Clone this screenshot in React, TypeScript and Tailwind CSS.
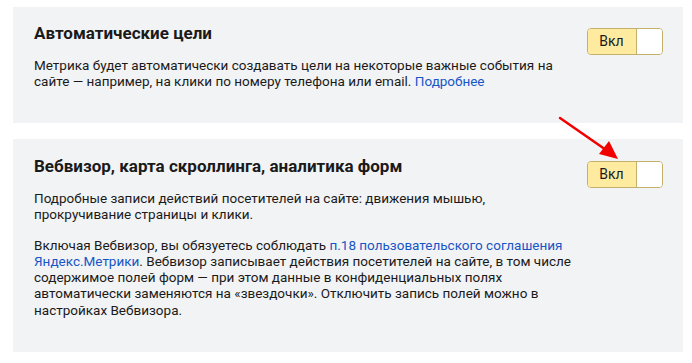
import React from "react";

function Toggle() {
  return (
    <div className="mt-[7px] flex h-[27px] w-[76px] shrink-0 overflow-hidden rounded-[4px] border border-[#c4b06a] text-[14px] text-[#1a1a1a]">
      <div className="flex flex-1 items-center justify-center bg-[#ffeba0] pr-[1px]">Вкл</div>
      <div className="w-[26px] border-l border-[#c4b06a] bg-white" />
    </div>
  );
}

function Section({
  title,
  children,
  className,
}: {
  title: string;
  children: React.ReactNode;
  className?: string;
}) {
  return (
    <div className={"flex items-start justify-between bg-[#f2f3f5] pl-[21px] pr-[20px] " + (className ?? "")}>
      <div className="w-[560px]">
        <h2 className="text-[17px] font-bold leading-[24px] text-[#1a1a1a]">{title}</h2>
        <div className="mt-[12px] text-[13.5px] leading-[16.25px] text-[#1a1a1a]">{children}</div>
      </div>
      <Toggle />
    </div>
  );
}

export default function App() {
  return (
    <div
      className="relative h-[363px] w-[692px] overflow-hidden bg-white pl-[13px] pr-[9px] pt-[7px]"
      style={{ fontFamily: 'Roboto, "Noto Sans", sans-serif' }}
    >
      <Section title="Автоматические цели" className="h-[116px] pt-[14px]">
        <p>
          Метрика будет автоматически создавать цели на некоторые важные события на сайте — например, на
          клики по номеру телефона или email. <a className="text-[#1756c6]">Подробнее</a>
        </p>
      </Section>

      <div className="h-[16px]" />

      <Section title="Вебвизор, карта скроллинга, аналитика форм" className="h-[213px] pt-[15px]">
        <p>
          Подробные записи действий посетителей на сайте: движения мышью,
          <br />
          прокручивание страницы и клики.
        </p>
        <p className="mt-[14px]">
          Включая Вебвизор, вы обязуетесь соблюдать{" "}
          <a className="text-[#1756c6]">п.18 пользовательского соглашения Яндекс.Метрики</a>. Вебвизор
          записывает действия посетителей на сайте, в том числе содержимое полей форм — при этом данные в
          конфиденциальных полях автоматически заменяются на «звездочки». Отключить запись полей можно в
          настройках Вебвизора.
        </p>
      </Section>

      {/* red pointer arrow */}
      <svg className="pointer-events-none absolute left-0 top-0" width="692" height="363">
        <line x1="560" y1="118" x2="609" y2="152" stroke="#f20000" strokeWidth="2.5" strokeLinecap="round" />
        <polygon points="618,159 599,154 609,141" fill="#f20000" />
      </svg>
    </div>
  );
}
